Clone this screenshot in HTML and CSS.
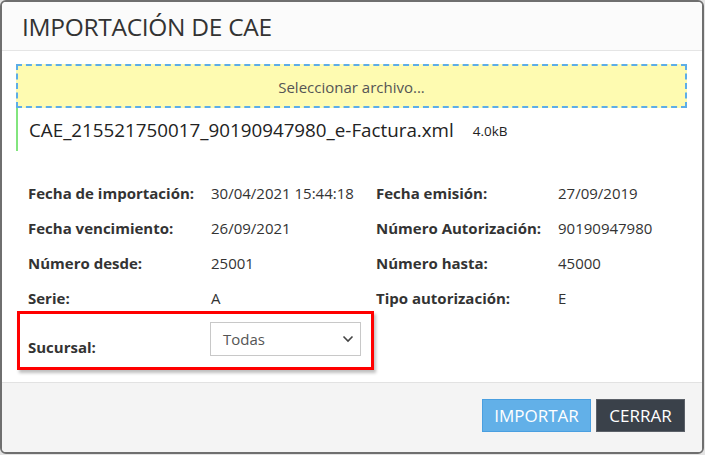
FILE: index.html
```html
<!DOCTYPE html>
<html lang="es">
<head>
    <meta charset="UTF-8">
    <meta name="viewport" content="width=device-width, initial-scale=1.0">
    <title>Importación de CAE</title>
    <link rel="stylesheet" href="styles.css">
</head>
<body>
    <div class="modal">
        <div class="modal-header">
            <h1>IMPORTACIÓN DE CAE</h1>
        </div>
        <div class="modal-body">
            <div class="dropzone">Seleccionar archivo...</div>
            <div class="file-item">
                <span class="file-name">CAE_215521750017_90190947980_e-Factura.xml</span>
                <span class="file-size">4.0kB</span>
            </div>

            <div class="details">
                <div class="label">Fecha de importación:</div>
                <div class="value">30/04/2021 15:44:18</div>
                <div class="label">Fecha emisión:</div>
                <div class="value">27/09/2019</div>

                <div class="label">Fecha vencimiento:</div>
                <div class="value">26/09/2021</div>
                <div class="label">Número Autorización:</div>
                <div class="value">90190947980</div>

                <div class="label">Número desde:</div>
                <div class="value">25001</div>
                <div class="label">Número hasta:</div>
                <div class="value">45000</div>

                <div class="label">Serie:</div>
                <div class="value">A</div>
                <div class="label">Tipo autorización:</div>
                <div class="value">E</div>
            </div>

            <div class="branch-row">
                <div class="label">Sucursal:</div>
                <div class="select">
                    <span>Todas</span>
                    <svg width="12" height="8" viewBox="0 0 12 8">
                        <path d="M1.5 1.5 L6 6 L10.5 1.5" fill="none" stroke="#444" stroke-width="1.6"/>
                    </svg>
                </div>
            </div>
        </div>
        <div class="modal-footer">
            <button class="btn btn-primary">IMPORTAR</button>
            <button class="btn btn-dark">CERRAR</button>
        </div>
    </div>
</body>
</html>
```

FILE: styles.css
```css
body {
    margin: 0;
    background-color: #e4e4e4;
    font-family: "Open Sans", "Noto Sans", sans-serif;
    color: #333;
}

.modal {
    box-sizing: border-box;
    width: 704px;
    height: 454px;
    border: 2px solid #6f6f6f;
    border-radius: 6px;
    background: white;
    display: flex;
    flex-direction: column;
    overflow: hidden;
}

.modal-header {
    height: 48px;
    background-color: #fbfbfb;
    border-bottom: 1px solid #e5e5e5;
    display: flex;
    align-items: center;
    padding-left: 20px;
}

.modal-header h1 {
    margin: 0;
    font-size: 24.5px;
    font-weight: 400;
    color: #333;
    letter-spacing: -0.3px;
}

.modal-body {
    padding: 13px 15px 0 14px;
    flex: 1;
}

.dropzone {
    border: 2px dashed #5dade8;
    background-color: #fefbb1;
    display: flex;
    align-items: center;
    justify-content: center;
    padding-top: 2px;
    box-sizing: border-box;
    height: 44px;
    font-size: 15px;
    color: #555;
}

.file-item {
    height: 43px;
    border-left: 2px solid #82e57e;
    display: flex;
    align-items: center;
    padding-left: 11px;
}

.file-name {
    font-size: 18.8px;
    color: #222;
}

.file-size {
    font-size: 13.5px;
    color: #222;
    margin-left: 19px;
    margin-top: 2px;
}

.details {
    display: grid;
    grid-template-columns: 183px 165px 182px 1fr;
    grid-auto-rows: 35px;
    margin-top: 24px;
    padding-left: 12px;
    font-size: 15px;
    align-items: center;
}

.label {
    font-weight: 700;
    color: #333;
}

.value {
    color: #333;
}

.branch-row {
    width: 357px;
    height: 59px;
    box-sizing: border-box;
    margin-top: -4px;
    margin-left: 1px;
    border: 3px solid #ff0000;
    box-shadow: 2px 3px 3px rgba(0, 0, 0, 0.25);
    display: flex;
    align-items: center;
    padding-left: 8px;
    font-size: 15px;
}

.branch-row .label {
    width: 182px;
    padding-top: 12px;
}

.select {
    box-sizing: border-box;
    width: 151px;
    height: 34px;
    border: 1px solid #c8c8c8;
    display: flex;
    align-items: center;
    justify-content: space-between;
    padding: 0 6px 0 12px;
    font-size: 15px;
    color: #555;
    margin-top: -4px;
}

.modal-footer {
    height: 70px;
    background-color: #f4f4f4;
    border-top: 1px solid #e2e2e2;
    display: flex;
    justify-content: flex-end;
    align-items: center;
    padding-right: 17px;
    gap: 5px;
    margin-top: 11px;
    padding-bottom: 4px;
    box-sizing: border-box;
}

.btn {
    height: 33px;
    font-family: "Open Sans", "Noto Sans", sans-serif;
    font-size: 17px;
    color: white;
    border-radius: 0;
    padding: 0 8px;
    cursor: pointer;
}

.btn-primary {
    background-color: #62b0e8;
    border: 1px solid #4a9fe0;
    width: 109px;
}

.btn-dark {
    background-color: #3a414a;
    border: 1px solid #5b6068;
    width: 89px;
}
```
